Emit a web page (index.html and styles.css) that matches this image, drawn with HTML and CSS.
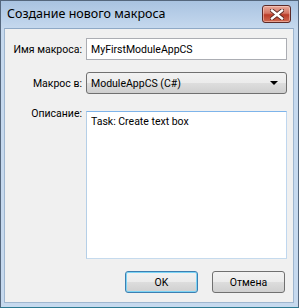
FILE: index.html
```html
<!DOCTYPE html>
<html lang="ru">
<head>
    <meta charset="UTF-8">
    <title>Создание нового макроса</title>
    <link rel="stylesheet" href="styles.css">
</head>
<body>
    <div class="window">
        <!-- Title bar -->
        <div class="titlebar">
            <span class="title">Создание нового макроса</span>
            <button class="close-btn" aria-label="Закрыть">
                <svg width="14" height="11" viewBox="0 0 14 11">
                    <path d="M2 1.5 L12 9.5 M12 1.5 L2 9.5" stroke="#5a2620" stroke-width="4.2" stroke-linecap="square"/>
                    <path d="M2 1.5 L12 9.5 M12 1.5 L2 9.5" stroke="#ffffff" stroke-width="2.4" stroke-linecap="square"/>
                </svg>
            </button>
        </div>

        <div class="client">
            <div class="form">
                <label class="label" for="macro-name">Имя макроса:</label>
                <input class="field" id="macro-name" type="text" value="MyFirstModuleAppCS">

                <label class="label">Макрос в:</label>
                <div class="select">
                    <span>ModuleAppCS (C#)</span>
                    <span class="arrow"></span>
                </div>

                <label class="label label-top" for="description">Описание:</label>
                <textarea class="field memo" id="description">Task: Create text box</textarea>
            </div>

            <div class="buttons">
                <button class="btn btn-default">OK</button>
                <button class="btn">Отмена</button>
            </div>
        </div>
    </div>
</body>
</html>
```

FILE: styles.css
```css
body {
    margin: 0;
    padding: 0;
    background: #ffffff;
    font-family: Roboto, 'Liberation Sans', Arial, sans-serif;
}

.window {
    width: 299px;
    height: 308px;
    box-sizing: border-box;
    border: 1px solid #55677d;
    border-bottom-color: #2d7a92;
    background: linear-gradient(to bottom, #a9c3e1 0px, #c6d9ee 28px, #c6d9ee 100%);
    padding: 0 4px 4px 3px;
    display: flex;
    flex-direction: column;
}

.titlebar {
    height: 27px;
    display: flex;
    align-items: flex-start;
    justify-content: space-between;
}

.title {
    font-family: 'Noto Sans', sans-serif;
    font-size: 12.5px;
    color: #000000;
    margin-top: 4px;
    margin-left: 3px;
}

.close-btn {
    width: 29px;
    height: 18px;
    margin-top: 4px;
    margin-right: 3px;
    padding: 0;
    border: 1px solid #5c2a28;
    border-radius: 3px;
    background: linear-gradient(to bottom, #e9a99b 0%, #d47664 45%, #bb3c28 55%, #cf6a52 100%);
    box-shadow: inset 0 0 0 1px rgba(255, 220, 210, 0.5);
    display: flex;
    align-items: center;
    justify-content: center;
}

.client {
    flex: 1;
    background: #f0f0f0;
    border: 1px solid #9fb6cf;
    border-top-color: #8fa9c6;
    padding: 9px 6px 0 4px;
    display: flex;
    flex-direction: column;
    font-size: 11px;
}

.form {
    display: grid;
    grid-template-columns: 73px 1fr;
    column-gap: 4px;
    grid-template-rows: 22px 22px 148px;
    row-gap: 12px;
}

.label {
    text-align: right;
    align-self: center;
    color: #000000;
    white-space: nowrap;
    font-size: 10.5px;
}

.label-top {
    align-self: start;
    margin-top: 1px;
}

.form .memo {
    margin-top: 5px;
}

.field {
    box-sizing: border-box;
    margin: 0;
    border: 1px solid #abadb3;
    background: #ffffff;
    padding: 2px 4px;
    font-family: Roboto, 'Liberation Sans', Arial, sans-serif;
    font-size: 10.5px;
    color: #000000;
    width: 100%;
    height: 100%;
}

.memo {
    resize: none;
    border-color: #7eb4ea #bfd7ef #c5daed #b5cfe7;
    height: 148px;
    padding-top: 3px;
}

.select {
    box-sizing: border-box;
    border: 1px solid #707070;
    border-radius: 3px;
    background: linear-gradient(to bottom, #f2f2f2 0%, #ebebeb 50%, #dddddd 51%, #cfcfcf 100%);
    padding: 0 8px 0 4px;
    display: flex;
    align-items: center;
    justify-content: space-between;
    color: #000000;
    font-size: 10.5px;
}

.arrow {
    width: 0;
    height: 0;
    border-left: 4px solid transparent;
    border-right: 4px solid transparent;
    border-top: 4px solid #000000;
}

.buttons {
    display: flex;
    justify-content: flex-end;
    gap: 14px;
    margin-top: 17px;
    padding-right: 2px;
}

.btn {
    width: 73px;
    height: 22px;
    border: 1px solid #707070;
    border-radius: 3px;
    background: linear-gradient(to bottom, #f2f2f2 0%, #ebebeb 50%, #dddddd 51%, #cfcfcf 100%);
    font-family: Roboto, 'Liberation Sans', Arial, sans-serif;
    font-size: 10.5px;
    color: #000000;
    padding: 0;
}

.btn-default {
    border-color: #3c7fb1;
    box-shadow: inset 0 0 0 1px #7dd4f5;
}
```
